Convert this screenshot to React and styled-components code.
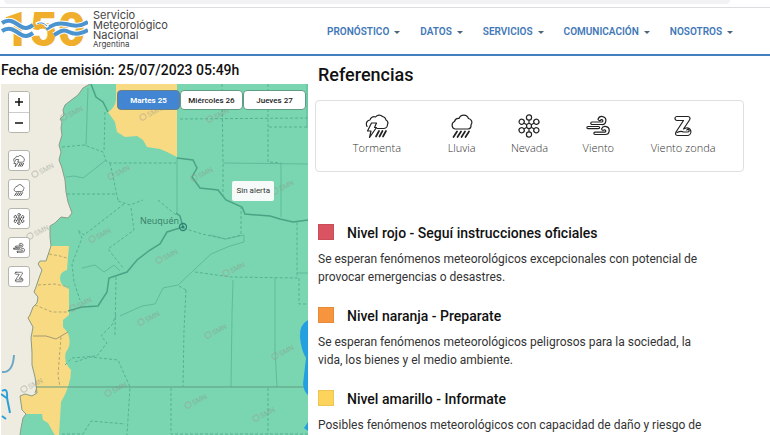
import React, { useState } from "react";
import styled, { createGlobalStyle } from "styled-components";

const GlobalStyle = createGlobalStyle`
  *, *::before, *::after { box-sizing: border-box; }
  html, body { margin: 0; background: #fff; }
  body { font-family: Roboto, "Liberation Sans", sans-serif; color: #111; overflow: hidden; }
  h1, h2, h3, p, ul { margin: 0; padding: 0; }
  button { font-family: inherit; }
`;

const Page = styled.div`
  display: flex;
  flex-direction: column;
  height: 100vh;
  overflow: hidden;
`;

const TopStrip = styled.div`
  flex: none;
  height: 8px;
  padding: 0 40px 0 4px;
  border-bottom: 1px solid #dcdde0;
`;

const AddressPill = styled.div`
  height: 4px;
  background: #f1f2f3;
  border-radius: 0 0 8px 8px;
`;

const Header = styled.header`
  flex: none;
  display: flex;
  align-items: center;
  justify-content: space-between;
  height: 48px;
  padding: 0 37px 4px 0;
  border-bottom: 2px solid #4380c0;
`;

const Brand = styled.a`
  display: flex;
  align-items: flex-start;
  gap: 5px;
  color: #444;
  text-decoration: none;
`;

const BrandMark = styled.svg`
  display: block;
  width: 88px;
  height: 39px;
`;

const BrandName = styled.span`
  display: flex;
  flex-direction: column;
  font: 400 11px/10px Inter, sans-serif;
`;

const BrandCountry = styled.small`
  font-size: 8px;
  line-height: 9px;
`;

const Nav = styled.nav`
  display: flex;
  gap: 20px;
  padding-top: 6px;
`;

const NavButton = styled.button`
  display: flex;
  align-items: center;
  gap: 5px;
  padding: 0;
  border: 0;
  background: none;
  color: #4278b8;
  font-size: 10px;
  line-height: 16px;
  font-weight: 600;
  cursor: pointer;

  &::after {
    content: "";
    border: 3px solid transparent;
    border-top-color: #4f6478;
    border-bottom: 0;
  }
`;

const Main = styled.main`
  flex: 1;
  display: grid;
  grid-template-columns: 40% 1fr;
  grid-template-rows: minmax(0, 1fr);
  min-height: 0;
`;

const MapColumn = styled.section`
  display: flex;
  flex-direction: column;
  min-height: 0;
  padding-left: 1px;
`;

const IssueDate = styled.h1`
  flex: none;
  font-size: 14px;
  line-height: 28px;
  font-weight: 500;
  white-space: nowrap;
`;

const MapFrame = styled.div`
  position: relative;
  flex: 1;
  min-height: 0;
  overflow: hidden;
  background: #eeece1;
`;

const MapDrawing = styled.svg`
  display: block;
  width: 100%;
  height: 100%;
`;

const MapTools = styled.div`
  position: absolute;
  top: 7px;
  left: 7px;
  display: flex;
  flex-direction: column;
  gap: 8px;
`;

const ZoomGroup = styled.div`
  display: flex;
  flex-direction: column;
  margin-bottom: 9px;
  border: 1px solid #b5b5ad;
  border-radius: 3px;
  background: #fff;
  overflow: hidden;
`;

const ZoomButton = styled.button`
  display: grid;
  place-items: center;
  width: 20px;
  height: 20px;
  padding: 0;
  border: 0;
  background: #fff;
  cursor: pointer;

  & + & { border-top: 1px solid #ccc; }
`;

const LayerButton = styled.button`
  display: grid;
  place-items: center;
  width: 22px;
  height: 21px;
  padding: 0;
  border: 1px solid #b5b5ad;
  border-radius: 3px;
  background: #fff;
  cursor: pointer;
`;

const DayTabs = styled.div`
  position: absolute;
  top: 6px;
  right: 2px;
  display: grid;
  grid-template-columns: repeat(3, 63px);
`;

const DayTab = styled.button`
  height: 20px;
  padding: 0;
  border: 1px solid ${(p) => (p.$active ? "#6b7f86" : "#5f9d86")};
  border-radius: 4px;
  background: ${(p) => (p.$active ? "#4285d3" : "#fff")};
  color: ${(p) => (p.$active ? "#fff" : "#222")};
  font-size: 8px;
  font-weight: ${(p) => (p.$active ? 700 : 500)};
  cursor: pointer;
`;

const MapTooltip = styled.div`
  position: absolute;
  top: 97px;
  right: 34px;
  padding: 0 4px;
  border-radius: 2px;
  background: #f6fbf9;
  color: #333;
  font-size: 8px;
  line-height: 20px;
`;

const Legend = styled.section`
  padding: 8px 26px 0 7px;
`;

const LegendTitle = styled.h2`
  padding-left: 3px;
  font-size: 18px;
  line-height: 22px;
  font-weight: 500;
`;

const Phenomena = styled.ul`
  display: grid;
  grid-template-columns: 122fr 48fr 88fr 50fr 120fr;
  align-items: center;
  height: 72px;
  margin: 14px 0 51px;
  border: 1px solid #dfdfdf;
  border-radius: 4px;
  list-style: none;
`;

const Phenomenon = styled.li`
  display: flex;
  flex-direction: column;
  align-items: center;
  gap: 2px;
  padding-bottom: 2px;
  color: #333;
  font: 300 11px/16px "Open Sans", sans-serif;
  white-space: nowrap;
`;

const Glyph = styled.svg`
  display: block;
  width: ${(p) => p.$size}px;
  height: ${(p) => p.$size}px;
  fill: none;
  stroke: #222;
  stroke-width: 1.2;
  stroke-linecap: round;
  stroke-linejoin: round;
`;

const Level = styled.article`
  margin-bottom: 20px;
  padding: 0 36px 0 3px;
`;

const LevelHeading = styled.h3`
  display: flex;
  align-items: center;
  gap: 13px;
  margin-bottom: 7px;
  font-size: 14px;
  line-height: 20px;
  font-weight: 500;
`;

const Swatch = styled.span`
  width: 16px;
  height: 16px;
  margin-bottom: 3px;
  border: 1px solid #0001;
  background: ${(p) => p.$color};
`;

const LevelText = styled.p`
  color: #333;
  font-size: 12px;
  line-height: 18px;
`;

const CLOUD = "M6 15H5A4 4 0 0 1 4.500 7.500A4 4 0 0 1 9 4.500A5 5 0 0 1 18.500 4.500A4 4 0 0 1 21 11A3.600 3.600 0 0 1 18 15Z";
const PETALS = [0, 60, 120, 180, 240, 300];

function WeatherIcon({ kind, size }) {
  return (
    <Glyph viewBox="0 0 24 24" $size={size} aria-hidden="true">
      {kind === "storm" && (
        <>
          <path d="M12 14.500H18.500A4 4 0 0 0 22.500 10.500A3.500 3.500 0 0 0 21 6A4.500 4.500 0 0 0 17.500 2.500A4.500 4.500 0 0 0 10.500 3A4 4 0 0 0 5 6A4 4 0 0 0 1.500 11L2 12.500" />
          <path d="M6.500 9H11.500L9.500 13.500H11.500L4.500 23.500L6 17H2.500Z" />
          <path strokeWidth="1.700" d="M14 17L11 22.500M17.500 17L14.500 22.500M21 17L18 22.500" />
        </>
      )}
      {kind === "rain" && (
        <>
          <path d={CLOUD} />
          <path strokeWidth="1.700" d="M7 17.500L3.500 23M11 17.500L7.500 23M15 17.500L11.500 23M19 17.500L15.500 23" />
        </>
      )}
      {kind === "snow" && (
        <>
          <circle cx="12" cy="12" r="2.500" />
          {PETALS.map((a) => (
            <g key={a} transform={`rotate(${a} 12 12)`}>
              <circle cx="12" cy="3.500" r="2.600" />
              <path d="M12 6.500V9" />
            </g>
          ))}
        </>
      )}
      {kind === "wind" && (
        <>
          <path d="M6 10.500H15.500A4 4 0 1 0 12 5.500Q13 7 14.500 6.500A1.200 1.200 0 1 1 15.500 8H6A1.200 1.200 0 0 0 6 10.500Z" />
          <path d="M2 12.500H12.500A1.100 1.100 0 0 1 12.500 14.700H2A1.100 1.100 0 0 1 2 12.500Z" />
          <path d="M9 20.500H19A4 4 0 1 0 15.500 15Q16.500 17 18 16A1.200 1.200 0 1 1 19 18.200H9A1.150 1.150 0 0 0 9 20.500Z" />
        </>
      )}
      {kind === "zonda" && (
        <>
          <path d="M6 2.500H17Q20 3 18.500 6L12.500 15L15 14A3.800 3.800 0 1 1 17 21.500H6.500Q3.500 21 5 18L12.500 6.500H6A2 2 0 0 1 6 2.500Z" />
          <path d="M6 18.500Q10 16.500 12.500 18H17A1.300 1.300 0 1 0 15.800 16" />
        </>
      )}
    </Glyph>
  );
}

const WAVES = [
  "M2 13C9 8 14 12 20 16S30 17 33 15",
  "M2 21C9 16 14 20 20 24S30 25 33 23",
  "M46 19C53 15 58 12 66 14S80 17 88 12",
  "M54 25C61 21 63 19 69 22S81 24 88 20",
];

function Logo() {
  return (
    <BrandMark viewBox="0 0 88 39" aria-hidden="true">
      <text x="2" y="36" fontFamily="Roboto, sans-serif" fontWeight="900" fontSize="48" fill="#efae2c">150</text>
      <g fill="none" stroke="#fff" strokeWidth="6">
        {WAVES.map((d) => <path key={d} d={d} />)}
      </g>
      <g fill="none" stroke="#4b94d0" strokeWidth="4">
        {WAVES.map((d) => <path key={d} d={d} />)}
      </g>
      <path d="M36 14Q42 10 48 17" fill="none" stroke="#fff" strokeWidth="3" />
      <path d="M37 14Q42 11 47 16" fill="none" stroke="#4b94d0" strokeWidth="1" />
    </BrandMark>
  );
}

const BORDER = "M90 84L83 88L78 95L70 101L65 105L63 110L64 115L60 119L62 122L61 128L62 135L59 145L61 152L59 160L62 168L65 180L66 192L68 202L72 213L68 218L61 217L55 223L50 226L50 237L51 246L48 255L46 261L40 261L38 264L42 270L39 278L36 287L34 292L38 297L37 303L33 307L30 315L28 318L33 327L31 338L32 352L32 365L35 377L37 393L32 396L25 394L20 396L22 410L26 414L23 418L21 428L20 435";
const YELLOW_WEST = "M51 246L69 246L68 257L67 270Q60 272 60 278Q60 286 69 289L69 315L63 320L63 327L68 333Q72 345 66 352Q63 362 71 370Q71 385 61 402L59 435H55L53 432L48 423L43 420L42 414H26L22 410L20 396L25 394L32 396L37 393L35 377L32 365L31 338L33 327L28 318L33 307L37 303L38 297L34 292L36 287L39 278L42 270L38 264L40 261H46L48 255Z";
const YELLOW_NORTH = "M116 84H177V157L167 152L160 149L147 147L143 140L137 136L125 137L117 132L115 122L108 112Q115 108 116 100Z";

const WATERMARKS = [
  [64, 117], [143, 117], [210, 119], [35, 174], [111, 176], [194, 178], [275, 191],
  [30, 236], [92, 239], [159, 260], [226, 273], [73, 308], [141, 322], [208, 335],
  [275, 356], [24, 389], [108, 393], [188, 405], [256, 418],
];

function AlertMap() {
  return (
    <MapDrawing viewBox="1 84 307 351" preserveAspectRatio="xMinYMin slice" role="img" aria-label="Mapa de alertas">
      <path d={`${BORDER}H308V84Z`} fill="#7ad6b0" />
      <path d={YELLOW_WEST} fill="#f8da83" />
      <path d={YELLOW_NORTH} fill="#f8da83" />
      <path d={BORDER} fill="none" stroke="#8d9c88" strokeWidth="1" />
      <g fill="none" stroke="#5fbb9a" strokeWidth="1">
        <path d="M88 88L86 146M83 178L106 160M66 177L74 176L83 178M223 163L308 164M281 163V217M307 84V128M177 158V215M82 268L95 265L104 272L114 265L120 271M178 285L211 254L230 246L244 242V235L226 239L210 235M178 285L163 288L155 304L142 306L120 316M297 273H308M233 280L232 315L231 387M275 278L275 350L277 387" />
        <path stroke="#4ba385" strokeWidth="1.500" d="M91 84L96 97L103 102L108 112M177 158L193 160L197 168L192 177L200 188L218 190L226 200L242 207L245 214L270 216L280 219L293 222L308 220M183 227L180 216L176 213M183 227L167 232L160 244L150 250L137 260L127 272L109 278L107 292L98 306L82 307L68 311" />
        <path stroke="#619b82" d="M36 387H308" />
      </g>
      <g fill="none" stroke="#55b292" strokeWidth="1" strokeDasharray="3 2">
        <path d="M62 147L84 145L103 152L106 161L110 163H176M105 112L104 152M110 163L118 200M67 194L117 194M118 201L130 205L143 200M124 204L84 235L78 230L82 238L72 264L74 282L80 300M180 119L307 118M222 84L223 163V198M268 84L268 162L281 163M269 127H308M241 206V235L225 239L202 234L183 228M131 208L134 230L108 249L124 269M158 200L176 215M195 272L231 277L297 278V222M299 278V304H308M186 290L184 330L183 387M179 286L186 290M116 277L115 335M75 362L90 357L118 360L130 387L127 435M62 434H83L91 421L125 424M65 365L72 358L97 356L107 343L101 336L112 325L116 315M171 388V434H308M268 388V434" />
        <path stroke="#b4a871" d="M49 254L60 256L67 258M38 285L55 284L69 287M35 305L52 312L68 312M61 337L58 375L60 387" />
      </g>
      <path d="M33 336L46 336L56 339L68 332M37 387L35 393" fill="none" stroke="#a59a72" />
      <path d="M2 372Q13 373 14 355" fill="none" stroke="#6ba8c5" strokeWidth="2" />
      <path d="M2 391Q8 387 7 398L10 413M1 394L8 399M2 416L6 419" fill="none" stroke="#2b9fd8" strokeWidth="2" />
      <path d="M308 320Q299 325 300 337Q301 350 306 358L303 384Q304 392 308 395ZM308 422L304 428L308 431Z" fill="#249fe0" />
      {WATERMARKS.map(([x, y]) => (
        <g key={`${x}-${y}`} transform={`rotate(-28 ${x} ${y})`} opacity="0.500">
          <circle cx={x} cy={y} r="3" fill="none" stroke="#a09a91" />
          <text x={x + 5} y={y + 3} fontSize="7" fontFamily="Roboto, sans-serif" fill="#8b9188">SMN</text>
        </g>
      ))}
      <text x="140" y="224" fontSize="9" fontFamily="Open Sans, sans-serif" fill="#36806b">Neuquén</text>
      <circle cx="183" cy="227" r="3.500" fill="none" stroke="#2e8273" strokeWidth="1.300" />
      <circle cx="183" cy="227" r="1.500" fill="#2e8273" />
    </MapDrawing>
  );
}

const NAV = ["PRONÓSTICO", "DATOS", "SERVICIOS", "COMUNICACIÓN", "NOSOTROS"];
const DAYS = ["Martes 25", "Miércoles 26", "Jueves 27"];
const PHENOMENA = [
  ["storm", "Tormenta"],
  ["rain", "Lluvia"],
  ["snow", "Nevada"],
  ["wind", "Viento"],
  ["zonda", "Viento zonda"],
];
const LEVELS = [
  ["#da5361", "Nivel rojo - Seguí instrucciones oficiales", "Se esperan fenómenos meteorológicos excepcionales con potencial de provocar emergencias o desastres."],
  ["#f7953f", "Nivel naranja - Preparate", "Se esperan fenómenos meteorológicos peligrosos para la sociedad, la vida, los bienes y el medio ambiente."],
  ["#fdd45b", "Nivel amarillo - Informate", "Posibles fenómenos meteorológicos con capacidad de daño y riesgo de"],
];

export default function App() {
  const [day, setDay] = useState(0);
  return (
    <Page>
      <GlobalStyle />
      <TopStrip><AddressPill /></TopStrip>
      <Header>
        <Brand href="#inicio">
          <Logo />
          <BrandName>
            <span>Servicio</span>
            <span>Meteorológico</span>
            <span>Nacional</span>
            <BrandCountry>Argentina</BrandCountry>
          </BrandName>
        </Brand>
        <Nav>
          {NAV.map((label) => <NavButton key={label}>{label}</NavButton>)}
        </Nav>
      </Header>
      <Main>
        <MapColumn>
          <IssueDate>Fecha de emisión: 25/07/2023 05:49h</IssueDate>
          <MapFrame>
            <AlertMap />
            <MapTools>
              <ZoomGroup>
                <ZoomButton aria-label="Acercar">
                  <svg width="8" height="8" viewBox="0 0 8 8"><path d="M0 4H8M4 0V8" stroke="#111" strokeWidth="1.500" /></svg>
                </ZoomButton>
                <ZoomButton aria-label="Alejar">
                  <svg width="8" height="8" viewBox="0 0 8 8"><path d="M0 4H8" stroke="#111" strokeWidth="1.500" /></svg>
                </ZoomButton>
              </ZoomGroup>
              {PHENOMENA.map(([kind, label]) => (
                <LayerButton key={kind} aria-label={label}>
                  <WeatherIcon kind={kind} size={12} />
                </LayerButton>
              ))}
            </MapTools>
            <DayTabs>
              {DAYS.map((label, i) => (
                <DayTab key={label} $active={day === i} aria-pressed={day === i} onClick={() => setDay(i)}>{label}</DayTab>
              ))}
            </DayTabs>
            <MapTooltip>Sin alerta</MapTooltip>
          </MapFrame>
        </MapColumn>
        <Legend>
          <LegendTitle>Referencias</LegendTitle>
          <Phenomena>
            {PHENOMENA.map(([kind, label]) => (
              <Phenomenon key={kind}>
                <WeatherIcon kind={kind} size={24} />
                {label}
              </Phenomenon>
            ))}
          </Phenomena>
          {LEVELS.map(([color, title, text]) => (
            <Level key={title}>
              <LevelHeading><Swatch $color={color} />{title}</LevelHeading>
              <LevelText>{text}</LevelText>
            </Level>
          ))}
        </Legend>
      </Main>
    </Page>
  );
}
